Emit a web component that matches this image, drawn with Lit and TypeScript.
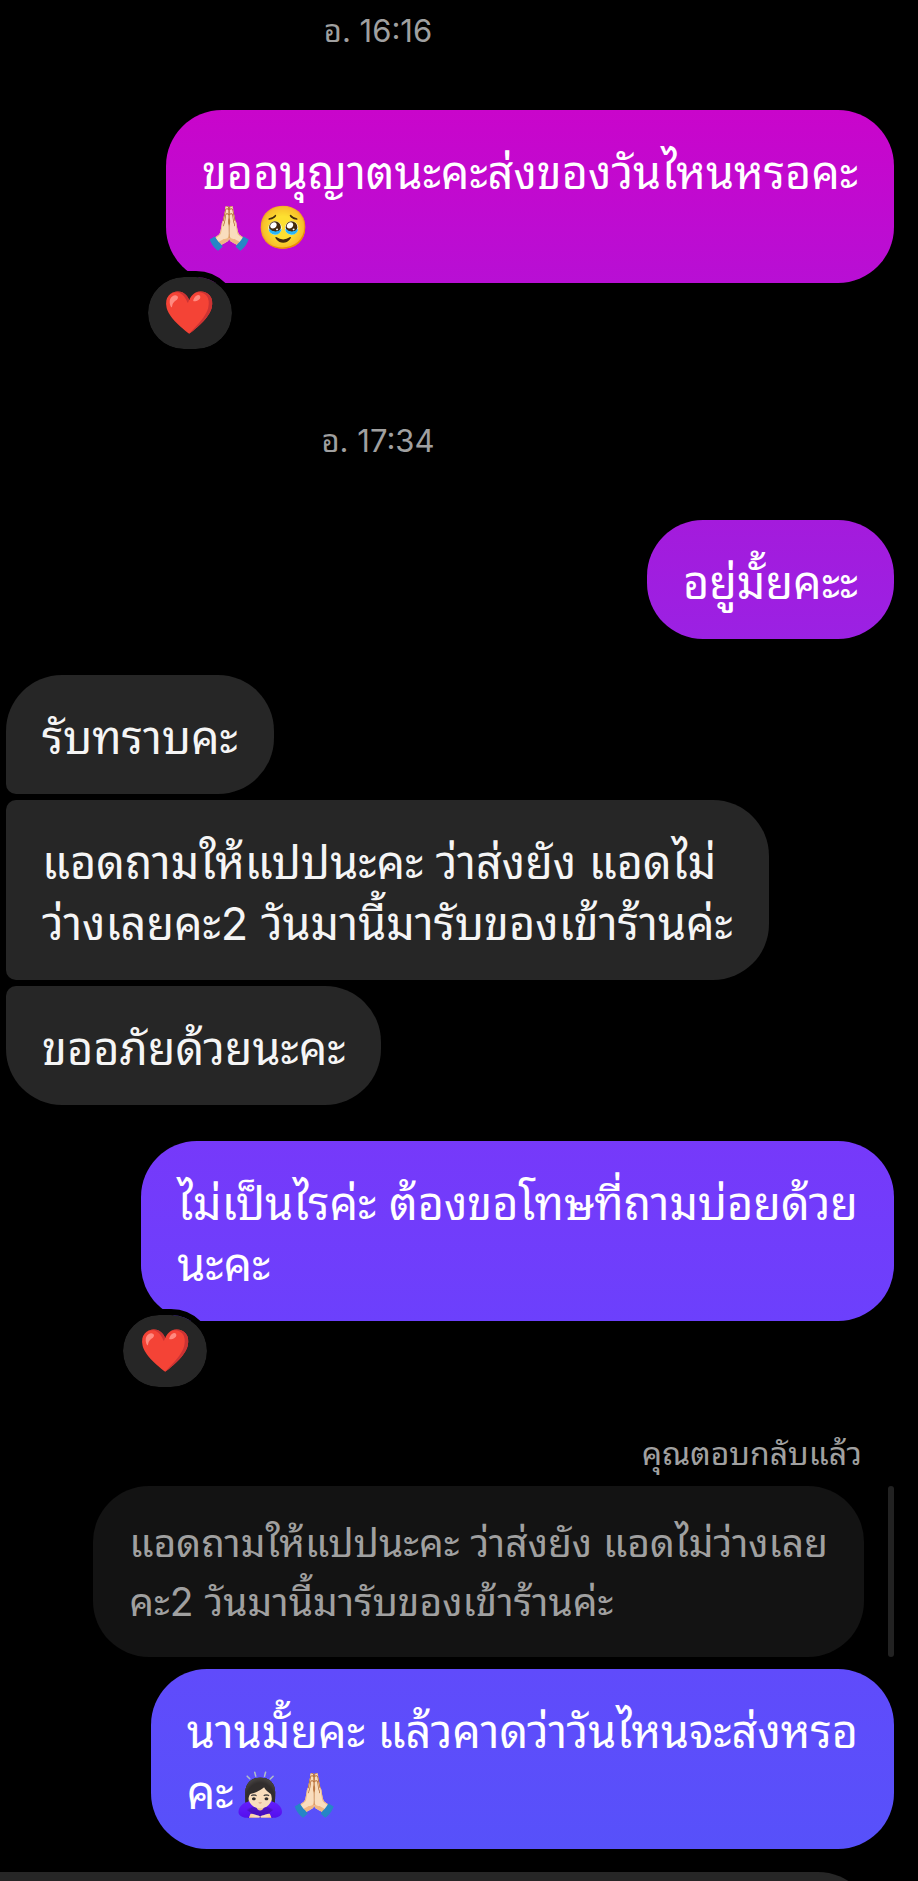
import { LitElement, html, css } from "lit";
import { customElement, property } from "lit/decorators.js";

@customElement("chat-time")
class ChatTime extends LitElement {
  static styles = css`
    :host {
      display: block;
      margin-right: 144px;
      text-align: center;
      font-size: 31px;
      line-height: 36px;
      color: #a0a0a0;
    }
  `;
  render() {
    return html`<time><slot></slot></time>`;
  }
}

@customElement("chat-bubble")
class ChatBubble extends LitElement {
  @property({ reflect: true }) tone = "received";
  @property({ reflect: true }) place = "single";
  @property() reaction = "";

  static styles = css`
    :host {
      display: block;
      position: relative;
      width: fit-content;
      font-size: 45px;
      line-height: 61px;
      white-space: nowrap;
      color: #fff;
    }
    .bubble {
      padding: 32px 36px 26px;
      border-radius: 56px;
      background: #262626;
    }
    :host(:not([tone="received"])) {
      align-self: flex-end;
    }
    :host([tone="received"]) {
      color: #f5f5f5;
    }
    :host([tone="magenta"]) .bubble {
      background: linear-gradient(#c905cb, #b80fd4);
    }
    :host([tone="violet"]) .bubble {
      background: linear-gradient(#a41bdc, #9b21e3);
    }
    :host([tone="indigo"]) .bubble {
      background: linear-gradient(#7639fa, #6c40fc);
    }
    :host([tone="blue"]) .bubble {
      background: linear-gradient(#604bfb, #5751fa);
    }
    :host([tone="quote"]) {
      color: #a0a0a0;
      font-size: 39px;
      line-height: 59px;
    }
    :host([tone="quote"]) .bubble {
      background: #131313;
      padding: 27px 36px 26px;
    }
    :host([place="first"]) .bubble {
      border-bottom-left-radius: 10px;
    }
    :host([place="middle"]) .bubble {
      border-top-left-radius: 10px;
      border-bottom-left-radius: 10px;
    }
    :host([place="last"]) .bubble {
      border-top-left-radius: 10px;
    }
    .reaction {
      position: absolute;
      left: -24px;
      top: calc(100% - 12px);
      box-sizing: border-box;
      width: 96px;
      height: 84px;
      padding: 0;
      border: 6px solid #000;
      border-radius: 42px;
      background: #262626;
      background-clip: padding-box;
      font: 42px/72px "Noto Color Emoji", sans-serif;
      text-align: center;
    }
  `;
  render() {
    return html`
      <div class="bubble"><slot></slot></div>
      ${this.reaction
        ? html`<button class="reaction" type="button">${this.reaction}</button>`
        : ""}
    `;
  }
}

@customElement("app-root")
class AppRoot extends LitElement {
  static styles = css`
    :host {
      display: block;
      min-height: 100vh;
      overflow: hidden;
      background: #000;
      font-family: Inter, "Noto Sans Thai Looped", "Noto Color Emoji", sans-serif;
    }
    .thread {
      display: flex;
      flex-direction: column;
      padding: 13px 24px 0 6px;
    }
    chat-time {
      margin-bottom: 61px;
    }
    .reacted {
      margin-bottom: 140px;
    }
    .incoming {
      display: flex;
      flex-direction: column;
      gap: 6px;
      margin: 36px 0;
    }
    .line {
      display: block;
    }
    .emoji-line {
      display: block;
      line-height: 46px;
      margin-bottom: 8px;
    }
    .emoji {
      display: inline-block;
      margin: 0 1px;
      font-size: 42px;
      line-height: 1;
      height: 42px;
    }
    .reply {
      display: flex;
      flex-direction: column;
      margin-top: 115px;
    }
    .reply-label {
      align-self: flex-end;
      margin: 0 32px 14px 0;
      font-size: 32px;
      line-height: 36px;
      color: #a0a0a0;
    }
    .quoted {
      display: flex;
      justify-content: flex-end;
      gap: 24px;
      margin-bottom: 12px;
    }
    .quote-bar {
      width: 6px;
      border-radius: 3px;
      background: #222;
    }
    .next {
      height: 60px;
      margin: 23px 44px -51px 0;
      border-radius: 0 56px 0 0;
      background: #262626;
    }
  `;
  render() {
    return html`
      <main class="thread">
        <chat-time>อ. 16:16</chat-time>
        <chat-bubble class="reacted" tone="magenta" reaction="❤️">
          <span class="line">ขออนุญาตนะคะส่งของวันไหนหรอคะ</span>
          <span class="emoji-line"
            ><span class="emoji">🙏🏻</span><span class="emoji">🥹</span></span
          >
        </chat-bubble>

        <chat-time>อ. 17:34</chat-time>
        <chat-bubble tone="violet"><span class="line">อยู่มั้ยคะะ</span></chat-bubble>

        <section class="incoming">
          <chat-bubble place="first"><span class="line">รับทราบคะ</span></chat-bubble>
          <chat-bubble place="middle">
            <span class="line">แอดถามให้แปปนะคะ ว่าส่งยัง แอดไม่</span>
            <span class="line">ว่างเลยคะ2 วันมานี้มารับของเข้าร้านค่ะ</span>
          </chat-bubble>
          <chat-bubble place="last"><span class="line">ขออภัยด้วยนะคะ</span></chat-bubble>
        </section>

        <chat-bubble tone="indigo" reaction="❤️">
          <span class="line">ไม่เป็นไรค่ะ ต้องขอโทษที่ถามบ่อยด้วย</span>
          <span class="line">นะคะ</span>
        </chat-bubble>

        <section class="reply">
          <span class="reply-label">คุณตอบกลับแล้ว</span>
          <div class="quoted">
            <chat-bubble tone="quote">
              <span class="line">แอดถามให้แปปนะคะ ว่าส่งยัง แอดไม่ว่างเลย</span>
              <span class="line">คะ2 วันมานี้มารับของเข้าร้านค่ะ</span>
            </chat-bubble>
            <div class="quote-bar"></div>
          </div>
          <chat-bubble tone="blue">
            <span class="line">นานมั้ยคะ แล้วคาดว่าวันไหนจะส่งหรอ</span>
            <span class="line"
              >คะ<span class="emoji">🙇🏻‍♀️</span><span class="emoji">🙏🏻</span></span
            >
          </chat-bubble>
        </section>
      </main>
      <div class="next"></div>
    `;
  }
}
